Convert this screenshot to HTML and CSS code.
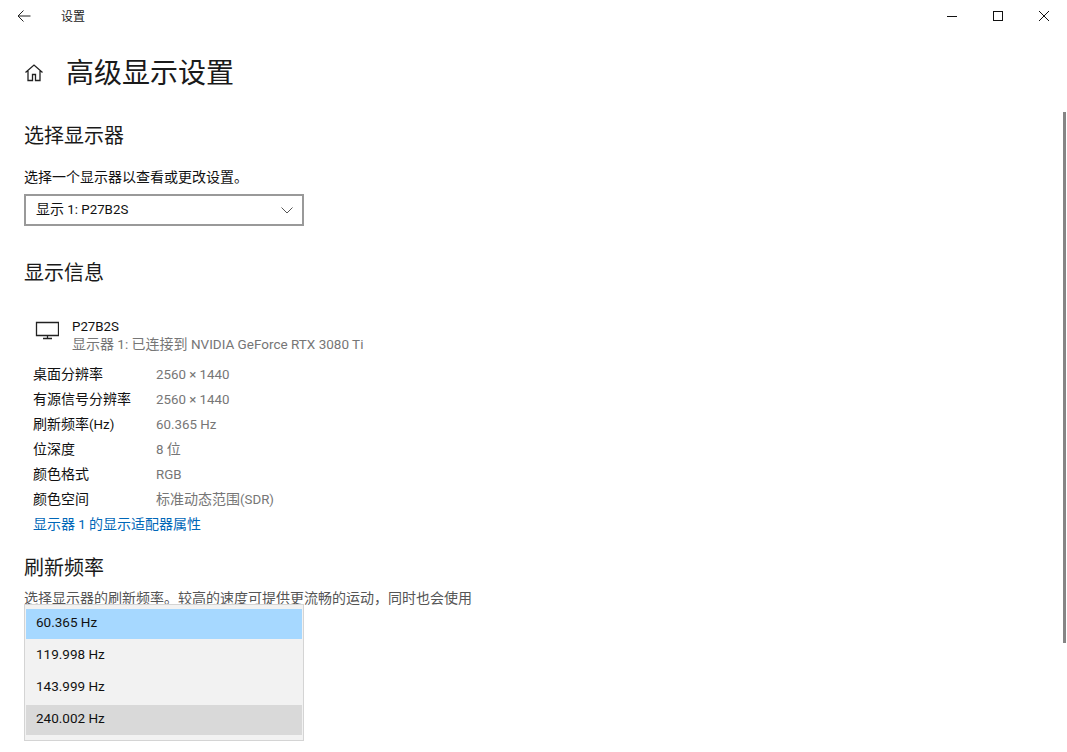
FILE: index.html
```html
<!DOCTYPE html>
<html lang="zh-CN">
<head>
<meta charset="utf-8">
<title>设置</title>
<link rel="stylesheet" href="styles.css">
</head>
<body>
<div class="window">
  <header class="titlebar">
    <svg class="back" width="16" height="16" viewBox="0 0 16 16"><path d="M14.500 8H2M7.500 2.500 2 8l5.500 5.500" fill="none" stroke="#222" stroke-width="1"/></svg>
    <span class="app-name">设置</span>
    <div class="controls">
      <svg width="12" height="12" viewBox="0 0 12 12"><path d="M1 6.500h10" stroke="#111" fill="none"/></svg>
      <svg width="12" height="12" viewBox="0 0 12 12"><rect x="1.500" y="1.500" width="9" height="9" stroke="#111" fill="none"/></svg>
      <svg width="12" height="12" viewBox="0 0 12 12"><path d="M1 1l10 10M11 1 1 11" stroke="#111" fill="none"/></svg>
    </div>
  </header>
  <main class="content">
    <div class="page-head">
      <svg class="home" width="20" height="20" viewBox="0 0 20 20"><path d="M1.500 9.500 10 2l8.500 7.500M4 8v9.500h4.500v-6h3v6H16V8" fill="none" stroke="#222" stroke-width="1.300"/></svg>
      <h1>高级显示设置</h1>
    </div>
    <h2 class="h-select">选择显示器</h2>
    <p class="desc">选择一个显示器以查看或更改设置。</p>
    <div class="select">
      <span>显示<span class="l"> 1: P27B2S</span></span>
      <svg width="12" height="7" viewBox="0 0 12 7"><path d="M.5.500 6 6 11.500.500" fill="none" stroke="#555"/></svg>
    </div>
    <h2 class="h-info">显示信息</h2>
    <div class="monitor">
      <svg width="24" height="20" viewBox="0 0 24 20"><path d="M1.500 2.500h22v13h-22zM12.500 15.500v3M8 18.500h9" fill="none" stroke="#222" stroke-width="1.300"/></svg>
      <div class="monitor-text">
        <div class="m-name"><span class="l">P27B2S</span></div>
        <div class="m-sub">显示器<span class="l"> 1: </span>已连接到<span class="l"> NVIDIA GeForce RTX 3080 Ti</span></div>
      </div>
    </div>
    <dl class="info">
      <div class="row"><dt>桌面分辨率</dt><dd><span class="l">2560 × 1440</span></dd></div>
      <div class="row"><dt>有源信号分辨率</dt><dd><span class="l">2560 × 1440</span></dd></div>
      <div class="row"><dt>刷新频率<span class="l">(Hz)</span></dt><dd><span class="l">60.365 Hz</span></dd></div>
      <div class="row"><dt>位深度</dt><dd><span class="l">8 </span>位</dd></div>
      <div class="row"><dt>颜色格式</dt><dd><span class="l">RGB</span></dd></div>
      <div class="row"><dt>颜色空间</dt><dd>标准动态范围<span class="l">(SDR)</span></dd></div>
    </dl>
    <a class="link" href="#">显示器<span class="l"> 1 </span>的显示适配器属性</a>
    <h2 class="h-rate">刷新频率</h2>
    <p class="desc rate-desc">选择显示器的刷新频率。较高的速度可提供更流畅的运动，同时也会使用</p>
  </main>
  <ul class="flyout">
    <li class="selected">60.365 Hz</li>
    <li>119.998 Hz</li>
    <li>143.999 Hz</li>
    <li class="hover">240.002 Hz</li>
  </ul>
  <div class="scrollbar"></div>
</div>
</body>
</html>
```
FILE: styles.css
```css
* { box-sizing: border-box; margin: 0; padding: 0; }
html, body { width: 1067px; height: 752px; overflow: hidden; background: #fff; }
body { font-family: Roboto, "Noto Sans CJK SC", sans-serif; color: #111; font-size: 14px; }
.window { position: relative; width: 1067px; height: 752px; overflow: hidden; }
.l { font-size: 13.3px; }
.titlebar { display: flex; align-items: center; height: 32px; padding-left: 16px; }
.back { display: block; }
.app-name { margin: 2px 0 0 29px; font-size: 12px; line-height: 30px; color: #222; }
.controls { margin-left: auto; display: flex; gap: 34px; padding-right: 17px; }
.controls svg { display: block; }
.content { padding-left: 24px; }
.page-head { display: flex; align-items: center; height: 50px; margin-top: 16px; }
.home { display: block; margin-right: 22px; }
h1 { font-size: 28px; font-weight: 400; line-height: 52px; height: 50px; color: #1a1a1a; }
h2 { font-size: 20px; font-weight: 400; line-height: 28px; color: #1a1a1a; }
.h-select { margin-top: 24px; }
.desc { font-size: 14px; line-height: 20px; }
.content > .desc { margin-top: 17px; }
.select { display: flex; align-items: center; justify-content: space-between; width: 280px; height: 32px; margin-top: 7px; padding: 0 9px 4px 10px; border: 2px solid #999; font-size: 14px; }
.select svg { display: block; margin-top: 4px; }
.h-info { margin-top: 33px; }
.monitor { display: flex; align-items: center; height: 40px; margin-top: 28px; padding-left: 11px; }
.monitor svg { display: block; margin-right: 13px; margin-bottom: 10px; }
.m-name { font-size: 14px; line-height: 18px; }
.m-sub { font-size: 14px; line-height: 18px; margin-top: -1px; color: #767676; }
.m-sub .l { font-size: 13.5px; }
.info { margin-top: 7px; padding-left: 9px; }
.row { display: flex; height: 25px; line-height: 25px; }
dt { width: 123px; }
dd { color: #767676; }
.link { display: block; margin-left: 9px; height: 25px; line-height: 25px; color: #0067b8; text-decoration: none; }
.h-rate { margin-top: 17px; line-height: 28px; }
.content > .rate-desc { margin-top: 6px; color: #555; }
.flyout { position: absolute; left: 24px; top: 604px; width: 280px; height: 137px; padding: 4px 1px 0; list-style: none; background: #f2f2f2; border: 1px solid #d4d4d4; font-size: 13.5px; }
.flyout li { height: 32px; line-height: 26px; padding-left: 10px; }
.flyout .selected { height: 30px; margin-bottom: 2px; background: #a6d8ff; }
.flyout .hover { height: 30px; background: #d9d9d9; }
.scrollbar { position: absolute; left: 1063px; top: 112px; width: 3px; height: 531px; background: #858585; }
```
